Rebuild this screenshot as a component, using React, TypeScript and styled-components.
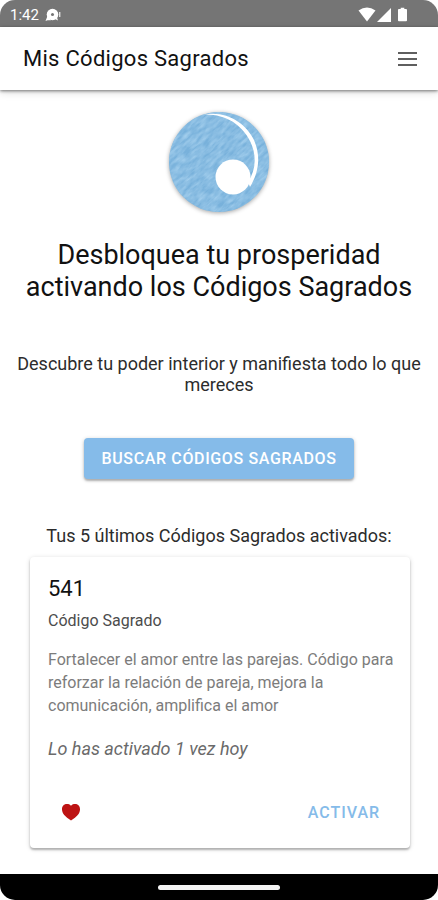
import React from "react";
import styled, { createGlobalStyle } from "styled-components";

const GlobalStyle = createGlobalStyle`
  *, *::before, *::after { box-sizing: border-box; }
  body {
    margin: 0;
    background: #fff;
    font-family: Roboto, "Liberation Sans", sans-serif;
    color: #2c2c2c;
  }
  h1, h2, h3, p { margin: 0; font-weight: 400; }
  button { font-family: inherit; border: 0; cursor: pointer; }
`;

const Screen = styled.div`
  display: flex;
  flex-direction: column;
  min-height: 100vh;
  overflow: hidden;
  border-radius: 15px;
  background: #fff;
`;

const StatusBar = styled.div`
  display: flex;
  align-items: center;
  justify-content: space-between;
  height: 27px;
  padding: 2px 31px 0 10px;
  background: #757575;
  color: #fff;
  font-size: 15px;
`;

const StatusGroup = styled.div<{ $gap: number }>`
  display: flex;
  align-items: center;
  gap: ${(p) => p.$gap}px;
`;

const AppBar = styled.header`
  display: flex;
  align-items: center;
  justify-content: space-between;
  height: 63px;
  padding: 0 20px 0 23px;
  background: #fff;
  box-shadow: 0 1px 3px rgba(0, 0, 0, 0.5), 0 3px 8px rgba(0, 0, 0, 0.12);
`;

const AppTitle = styled.h2`
  font-size: 22px;
  line-height: 28px;
  letter-spacing: 0.0125em;
  color: #111;
`;

const MenuButton = styled.button`
  display: flex;
  padding: 0;
  background: none;
`;

const Content = styled.main`
  flex: 1;
  display: flex;
  flex-direction: column;
  align-items: center;
  padding: 21px 16px 26px;
`;

const Headline = styled.h1`
  margin-top: 26px;
  font-size: 27px;
  line-height: 32px;
  text-align: center;
  color: #111;
`;

const Lead = styled.p`
  margin-top: 50px;
  font-size: 18px;
  line-height: 21px;
  text-align: center;
`;

const SearchButton = styled.button`
  margin-top: 43px;
  height: 41px;
  padding: 0 17px;
  border-radius: 4px;
  background: #85bbe9;
  color: #fff;
  font-size: 16px;
  font-weight: 500;
  letter-spacing: 0.04em;
  box-shadow: 0 2px 2px rgba(0, 0, 0, 0.22), 0 1px 4px rgba(0, 0, 0, 0.2);
`;

const ListTitle = styled.p`
  margin-top: 46px;
  font-size: 18px;
  line-height: 21px;
  text-align: center;
`;

const Card = styled.article`
  align-self: stretch;
  margin: 11px 12px 0 14px;
  padding: 18px 16px 16px 18px;
  border-radius: 4px;
  background: #fff;
  box-shadow: 0 2px 2px rgba(0, 0, 0, 0.24), 0 1px 5px rgba(0, 0, 0, 0.16);
`;

const CardCode = styled.h2`
  font-size: 22px;
  line-height: 28px;
  color: #111;
`;

const CardKind = styled.h3`
  margin-top: 8px;
  font-size: 16px;
  line-height: 20px;
  color: #4c4c4c;
`;

const CardText = styled.p`
  margin-top: 17px;
  font-size: 16px;
  line-height: 23px;
  color: #7c7c7c;
`;

const CardNote = styled.p`
  margin-top: 21px;
  font-size: 18px;
  line-height: 21px;
  font-style: italic;
  color: #6a6a6a;
`;

const CardActions = styled.div`
  display: flex;
  align-items: center;
  justify-content: space-between;
  margin-top: 33px;
`;

const TextButton = styled.button`
  display: flex;
  align-items: center;
  height: 40px;
  padding: 0 14px;
  background: none;
  color: #85bbe9;
  font-size: 16px;
  font-weight: 500;
  letter-spacing: 0.06em;
`;

const NavBar = styled.footer`
  display: flex;
  align-items: center;
  justify-content: center;
  height: 26px;
  background: #000;
`;

const NavHandle = styled.div`
  width: 28%;
  height: 5px;
  border-radius: 3px;
  background: #f4f4f4;
`;

const NoticeIcon = () => (
  <svg width="17" height="14" viewBox="0 0 17 14" aria-hidden="true">
    <circle cx="7.5" cy="6.5" r="5.8" fill="#fff" />
    <path d="M0.5 13 L2.5 8 L6 12.2 L2.5 12.3 Z M10 11 L12 9.5 L13 12.5 Z" fill="#fff" />
    <rect x="14" y="4" width="1.4" height="5" fill="#e2e2e2" />
    <circle cx="7.5" cy="6.5" r="1.5" fill="#757575" />
  </svg>
);

const WifiIcon = () => (
  <svg width="18" height="15" viewBox="0 0 18 15" aria-hidden="true">
    <path d="M0.5 3.6 Q9 -2.8 17.5 3.6 L9 14.4 Z" fill="#fff" />
  </svg>
);

const SignalIcon = () => (
  <svg width="14" height="14" viewBox="0 0 14 14" aria-hidden="true">
    <path d="M14 0 V14 H0 Z" fill="#fff" />
  </svg>
);

const BatteryIcon = () => (
  <svg width="9" height="15" viewBox="0 0 10 16" aria-hidden="true">
    <path d="M3 0.5 H7 V2 H9 Q10 2 10 3 V14.5 Q10 15.5 9 15.5 H1 Q0 15.5 0 14.5 V3 Q0 2 1 2 H3 Z" fill="#fff" />
  </svg>
);

const MenuIcon = () => (
  <svg width="21" height="16" viewBox="0 0 21 16" fill="#5f5f5f" aria-hidden="true">
    <rect x="1" y="1" width="19" height="2" />
    <rect x="1" y="7" width="19" height="2" />
    <rect x="1" y="13" width="19" height="2" />
  </svg>
);

const LogoArt = styled.svg`
  display: block;
  filter: drop-shadow(0 1px 2px rgba(0, 0, 0, 0.35));
`;

const Logo = () => (
  <LogoArt width="102" height="102" viewBox="0 0 102 102" role="img" aria-label="Códigos Sagrados">
    <defs>
      <filter id="paper" x="0" y="0" width="100%" height="100%" colorInterpolationFilters="sRGB">
        <feTurbulence type="fractalNoise" baseFrequency="0.1 0.35" numOctaves="3" seed="4" />
        <feColorMatrix values="0 0 0 0 0.64  0 0 0 0 0.81  0 0 0 0 0.93  1.6 0 0 0 -0.4" />
      </filter>
      <clipPath id="disc">
        <circle cx="51" cy="51" r="50" />
      </clipPath>
    </defs>
    <circle cx="51" cy="51" r="50" fill="#78b1db" />
    <g clipPath="url(#disc)">
      <rect x="-40" y="-40" width="182" height="182" filter="url(#paper)" transform="rotate(-42 51 51)" />
    </g>
    <path
      d="M36 3.6 C58 -1 78 12 86 29 C93 45 91 61 82 76 L80 71 C88 59 89 44 82 30 C74 14 58 3 36 3.6 Z"
      fill="#fff"
    />
    <circle cx="65" cy="66" r="17.5" fill="#fff" />
  </LogoArt>
);

const FavButton = styled.button`
  display: flex;
  padding: 0 13px;
  background: none;
`;

const HeartIcon = () => (
  <svg width="20" height="18" viewBox="0 0 20 18" aria-hidden="true">
    <path
      d="M10 17.5 C4 13.6 1 10.4 1 6.2 C1 3.2 3 1 5.6 1 C7.5 1 9 1.4 10 2.8 C11 1.4 12.5 1 14.4 1 C17 1 19 3.2 19 6.2 C19 10.4 16 13.6 10 17.5 Z"
      fill="#bd1313"
    />
  </svg>
);

export default function App() {
  return (
    <>
      <GlobalStyle />
      <Screen>
        <StatusBar>
          <StatusGroup $gap={6}>
            <span>1:42</span>
            <NoticeIcon />
          </StatusGroup>
          <StatusGroup $gap={7}>
            <StatusGroup $gap={1}>
              <WifiIcon />
              <SignalIcon />
            </StatusGroup>
            <BatteryIcon />
          </StatusGroup>
        </StatusBar>
        <AppBar>
          <AppTitle>Mis Códigos Sagrados</AppTitle>
          <MenuButton aria-label="Menú">
            <MenuIcon />
          </MenuButton>
        </AppBar>
        <Content>
          <Logo />
          <Headline>Desbloquea tu prosperidad activando los Códigos Sagrados</Headline>
          <Lead>Descubre tu poder interior y manifiesta todo lo que mereces</Lead>
          <SearchButton>BUSCAR CÓDIGOS SAGRADOS</SearchButton>
          <ListTitle>Tus 5 últimos Códigos Sagrados activados:</ListTitle>
          <Card>
            <CardCode>541</CardCode>
            <CardKind>Código Sagrado</CardKind>
            <CardText>
              Fortalecer el amor entre las parejas. Código para reforzar la relación de pareja, mejora la
              comunicación, amplifica el amor
            </CardText>
            <CardNote>Lo has activado 1 vez hoy</CardNote>
            <CardActions>
              <FavButton aria-label="Favorito">
                <HeartIcon />
              </FavButton>
              <TextButton>ACTIVAR</TextButton>
            </CardActions>
          </Card>
        </Content>
        <NavBar>
          <NavHandle />
        </NavBar>
      </Screen>
    </>
  );
}
